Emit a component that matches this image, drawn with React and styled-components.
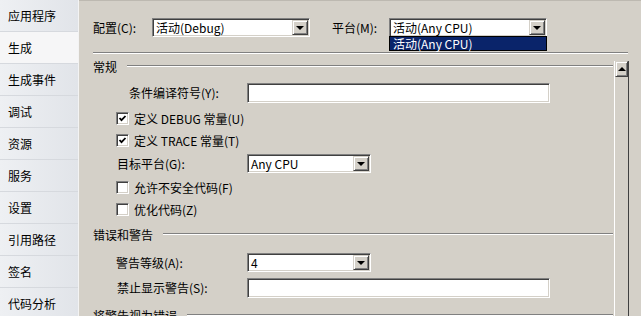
import styled, { createGlobalStyle } from 'styled-components';

const GlobalStyle = createGlobalStyle`
  html, body {
    margin: 0;
    padding: 0;
  }
  body {
    font-family: "Noto Sans CJK SC", "Liberation Sans", sans-serif;
    font-size: 12px;
    color: #000;
  }
`;

const Window = styled.div`
  width: 641px;
  height: 316px;
  display: flex;
  overflow: hidden;
  background: #d4d0c8;
`;

const Sidebar = styled.div`
  width: 78px;
  flex-shrink: 0;
  display: flex;
  flex-direction: column;
  background: linear-gradient(to right, #eef0f3, #e1e4e9);
  border-right: 1px solid #f3f3f3;
`;

const Tab = styled.div`
  height: 31px;
  flex-shrink: 0;
  border-bottom: 1px solid #d6d9de;
  padding-left: 8px;
  display: flex;
  align-items: center;
  font-size: 12px;
  background: ${p => (p.$active ? '#f6f6f7' : 'transparent')};
`;

const Main = styled.div`
  flex: 1;
  min-width: 0;
  display: flex;
  flex-direction: column;
  border-top: 1px solid #bdb9b1;
`;

const ConfigBar = styled.div`
  display: flex;
  align-items: center;
  margin-top: 17px;
  padding-left: 14px;
`;

const Label = styled.span`
  width: ${p => p.$width}px;
  flex-shrink: 0;
  white-space: nowrap;
  line-height: 14px;
  margin-left: ${p => p.$offset || 0}px;
`;

const Combo = styled.div`
  position: relative;
  width: ${p => p.$width}px;
  height: 19px;
  box-sizing: border-box;
  background: #fff;
  border: 1px solid;
  border-color: #808080 #fff #fff #808080;
  box-shadow: inset 1px 1px 0 #404040, inset -1px -1px 0 #d4d0c8;
  display: flex;
  align-items: center;
`;

const ComboText = styled.span`
  flex: 1;
  padding-left: 3px;
  white-space: nowrap;
  line-height: 15px;
`;

const DropButton = styled.div`
  width: 16px;
  height: 15px;
  margin-right: 1px;
  box-sizing: border-box;
  background: #d4d0c8;
  border: 1px solid;
  border-color: #d4d0c8 #404040 #404040 #d4d0c8;
  box-shadow: inset 1px 1px 0 #fff, inset -1px -1px 0 #808080;
  display: flex;
  align-items: center;
  justify-content: center;
`;

const Arrow = styled.div`
  width: 0;
  height: 0;
  border-left: 4px solid transparent;
  border-right: 4px solid transparent;
  ${p => (p.$up ? 'border-bottom: 4px solid #000;' : 'border-top: 4px solid #000;')}
`;

const DropList = styled.div`
  position: absolute;
  top: 100%;
  left: -1px;
  right: -1px;
  height: 15px;
  box-sizing: border-box;
  border: 1px solid #000;
  background: #0a246a;
  color: #fff;
  padding-left: 3px;
  line-height: 13px;
  white-space: nowrap;
  z-index: 2;
`;

const EtchedLine = styled.div`
  height: 1px;
  border-top: 1px solid #808080;
  border-bottom: 1px solid #fff;
  box-sizing: content-box;
  height: 0;
`;

const Separator = styled(EtchedLine)`
  margin: 15px 13px 0 14px;
`;

const Body = styled.div`
  flex: 1;
  min-height: 0;
  display: flex;
  margin-right: 12px;
`;

const Panel = styled.div`
  flex: 1;
  min-width: 0;
  padding: 2px 1px 0 14px;
  display: flex;
  flex-direction: column;
`;

const GroupHeader = styled.div`
  height: 20px;
  flex-shrink: 0;
  display: flex;
  align-items: center;
  gap: 10px;
  margin-top: ${p => p.$top || 0}px;
  white-space: nowrap;
  & > ${EtchedLine} {
    flex: 1;
  }
`;

const FieldRow = styled.div`
  display: grid;
  grid-template-columns: 154px auto;
  align-items: center;
  flex-shrink: 0;
  margin-top: ${p => p.$top}px;
`;

const FieldLabel = styled.span`
  padding-left: ${p => p.$indent}px;
  white-space: nowrap;
  line-height: 14px;
`;

const TextBox = styled.div`
  width: 303px;
  height: 20px;
  box-sizing: border-box;
  background: #fff;
  border: 1px solid;
  border-color: #808080 #fff #fff #808080;
  box-shadow: inset 1px 1px 0 #404040, inset -1px -1px 0 #d4d0c8;
`;

const CheckRow = styled.label`
  height: 22px;
  flex-shrink: 0;
  display: flex;
  align-items: center;
  gap: 5px;
  padding-left: 23px;
  margin-top: ${p => p.$top || 0}px;
  white-space: nowrap;
`;

const CheckBox = styled.span`
  width: 13px;
  height: 13px;
  box-sizing: border-box;
  background: #fff;
  border: 1px solid;
  border-color: #808080 #fff #fff #808080;
  box-shadow: inset 1px 1px 0 #404040, inset -1px -1px 0 #d4d0c8;
  display: flex;
  align-items: center;
  justify-content: center;
`;

const Scrollbar = styled.div`
  width: 15px;
  flex-shrink: 0;
  margin-top: 7px;
  box-sizing: border-box;
  border-left: 1px solid #fff;
  border-right: 1px solid #404040;
  background: #d4d0c8;
`;

const ScrollButton = styled.div`
  height: 16px;
  box-sizing: border-box;
  border: 1px solid;
  border-color: #d4d0c8 #404040 #404040 #d4d0c8;
  box-shadow: inset 1px 1px 0 #fff, inset -1px -1px 0 #808080;
  display: flex;
  align-items: center;
  justify-content: center;
`;

const tabs = ['应用程序', '生成', '生成事件', '调试', '资源', '服务', '设置', '引用路径', '签名', '代码分析'];

function Check({ checked }) {
  return (
    <CheckBox>
      {checked && (
        <svg width="9" height="9" viewBox="0 0 9 9">
          <polyline points="1.5,4 3.5,6.2 7.5,2" fill="none" stroke="#000" strokeWidth="1.8" />
        </svg>
      )}
    </CheckBox>
  );
}

function Dropdown({ width, value, children }) {
  return (
    <Combo $width={width}>
      <ComboText>{value}</ComboText>
      <DropButton>
        <Arrow />
      </DropButton>
      {children}
    </Combo>
  );
}

export default function App() {
  return (
    <>
      <GlobalStyle />
      <Window>
        <Sidebar>
          {tabs.map(t => (
            <Tab key={t} $active={t === '生成'}>{t}</Tab>
          ))}
        </Sidebar>
        <Main>
          <ConfigBar>
            <Label $width={59}>配置(C):</Label>
            <Dropdown width={158} value="活动(Debug)" />
            <Label $width={57} $offset={22}>平台(M):</Label>
            <Dropdown width={158} value="活动(Any CPU)">
              <DropList>活动(Any CPU)</DropList>
            </Dropdown>
          </ConfigBar>
          <Separator />
          <Body>
            <Panel>
              <GroupHeader>
                常规
                <EtchedLine />
              </GroupHeader>
              <FieldRow $top={7}>
                <FieldLabel $indent={36}>条件编译符号(Y):</FieldLabel>
                <TextBox />
              </FieldRow>
              <CheckRow $top={4}>
                <Check checked />
                定义 DEBUG 常量(U)
              </CheckRow>
              <CheckRow>
                <Check checked />
                定义 TRACE 常量(T)
              </CheckRow>
              <FieldRow $top={3}>
                <FieldLabel $indent={24}>目标平台(G):</FieldLabel>
                <Dropdown width={124} value="Any CPU" />
              </FieldRow>
              <CheckRow $top={3}>
                <Check />
                允许不安全代码(F)
              </CheckRow>
              <CheckRow>
                <Check />
                优化代码(Z)
              </CheckRow>
              <GroupHeader $top={4}>
                错误和警告
                <EtchedLine />
              </GroupHeader>
              <FieldRow $top={9}>
                <FieldLabel $indent={23}>警告等级(A):</FieldLabel>
                <Dropdown width={124} value="4" />
              </FieldRow>
              <FieldRow $top={6}>
                <FieldLabel $indent={24}>禁止显示警告(S):</FieldLabel>
                <TextBox />
              </FieldRow>
              <GroupHeader $top={7}>
                将警告视为错误
                <EtchedLine />
              </GroupHeader>
            </Panel>
            <Scrollbar>
              <ScrollButton>
                <Arrow $up />
              </ScrollButton>
            </Scrollbar>
          </Body>
        </Main>
      </Window>
    </>
  );
}
